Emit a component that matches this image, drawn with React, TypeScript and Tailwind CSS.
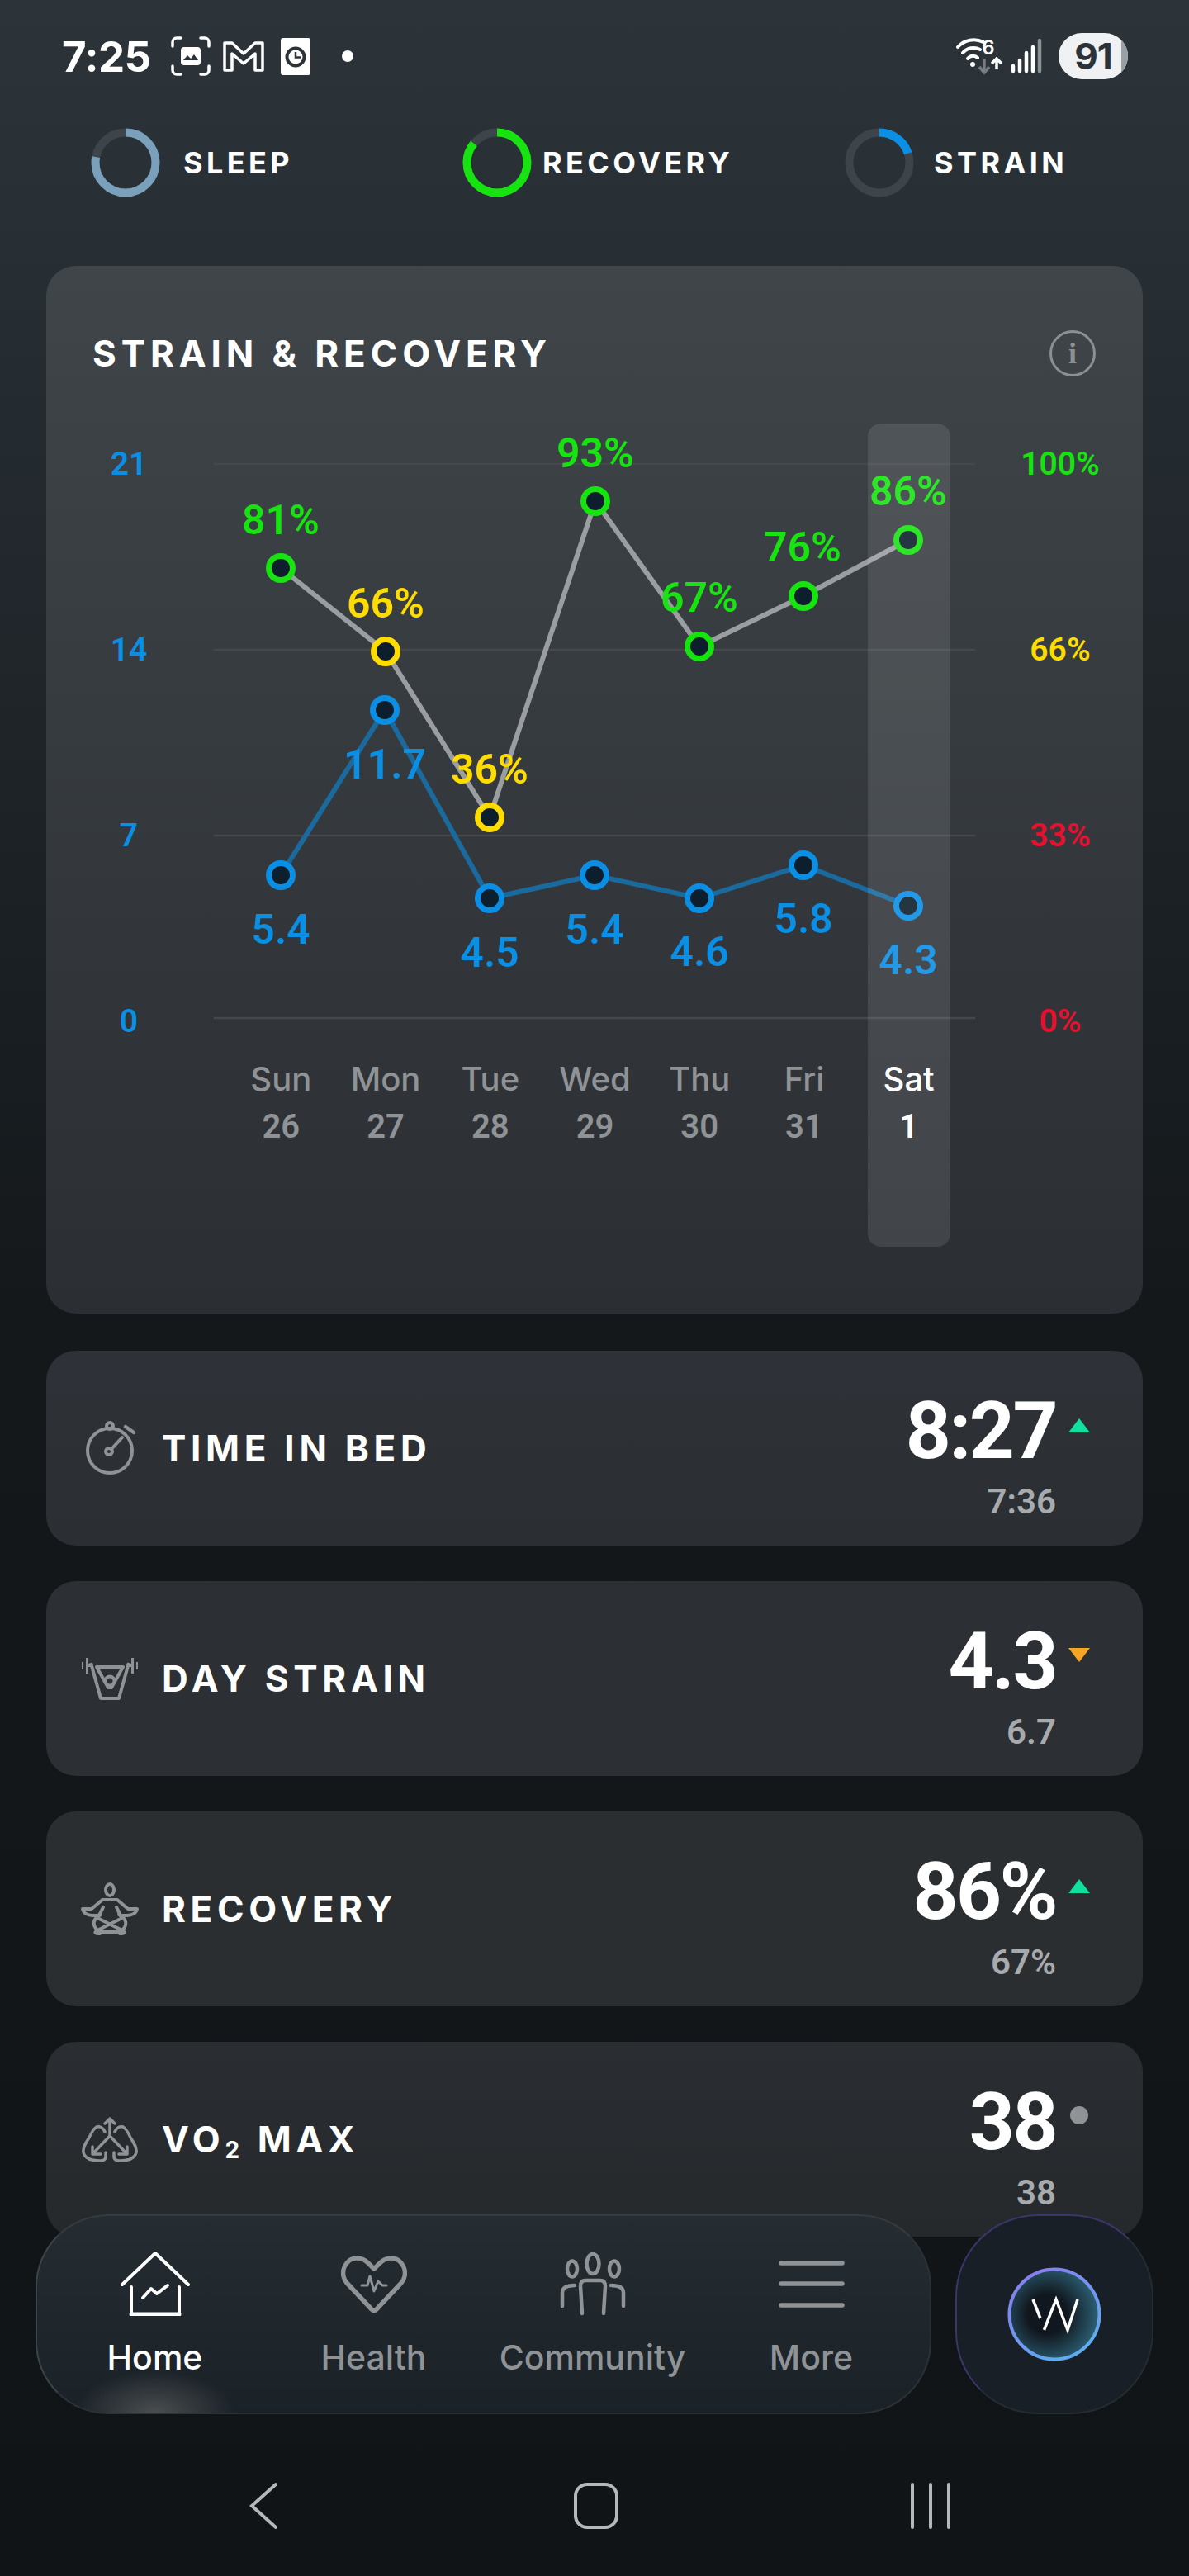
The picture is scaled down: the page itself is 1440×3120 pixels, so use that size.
import React from "react";

const GREEN = "#16e30f";
const YELLOW = "#ffdc00";
const RED = "#e8102e";
const BLUE = "#0b8fe4";

const recovery = [
  { x: 340, y: 688, label: "81%", lx: 340, ly: 630, color: GREEN },
  { x: 467, y: 789, label: "66%", lx: 467, ly: 731, color: YELLOW },
  { x: 593, y: 990, label: "36%", lx: 593, ly: 932, color: YELLOW },
  { x: 721, y: 607, label: "93%", lx: 721, ly: 549, color: GREEN },
  { x: 847, y: 783, label: "67%", lx: 847, ly: 724, color: GREEN },
  { x: 973, y: 722, label: "76%", lx: 972, ly: 663, color: GREEN },
  { x: 1100, y: 654, label: "86%", lx: 1100, ly: 595, color: GREEN },
];

const strain = [
  { x: 340, y: 1060, label: "5.4", ly: 1126 },
  { x: 466, y: 860, label: "11.7", ly: 926 },
  { x: 593, y: 1088, label: "4.5", ly: 1154 },
  { x: 720, y: 1060, label: "5.4", ly: 1126 },
  { x: 847, y: 1088, label: "4.6", ly: 1153 },
  { x: 973, y: 1048, label: "5.8", ly: 1113 },
  { x: 1100, y: 1097, label: "4.3", ly: 1163 },
];

const gridLines = [562, 787, 1012, 1233];

const leftAxis = [
  { y: 562, label: "21" },
  { y: 787, label: "14" },
  { y: 1012, label: "7" },
  { y: 1237, label: "0" },
];

const rightAxis = [
  { y: 562, label: "100%", color: GREEN },
  { y: 787, label: "66%", color: YELLOW },
  { y: 1012, label: "33%", color: RED },
  { y: 1237, label: "0%", color: RED },
];

const days = [
  ["Sun", "26"],
  ["Mon", "27"],
  ["Tue", "28"],
  ["Wed", "29"],
  ["Thu", "30"],
  ["Fri", "31"],
  ["Sat", "1"],
];

const Ring = ({ pct, color }: { pct: number; color: string }) => (
  <svg width="84" height="84" viewBox="0 0 84 84" className="shrink-0">
    <circle cx="42" cy="42" r="36.5" fill="none" stroke="#3e454a" strokeWidth="10" />
    <circle
      cx="42"
      cy="42"
      r="36.5"
      fill="none"
      stroke={color}
      strokeWidth="10"
      pathLength={100}
      strokeDasharray={`${pct} 100`}
      transform="rotate(-90 42 42)"
    />
  </svg>
);

const StatusBar = () => (
  <div className="flex h-[136px] items-center justify-between pl-[75px] pr-[74px]">
    <div className="flex items-center">
      <span className="w-[132px] font-['Inter',sans-serif] text-[51px] font-bold leading-none tracking-[-0.5px] text-white">7:25</span>
      <svg width="48" height="48" viewBox="0 0 48 48" fill="none" stroke="#fff" strokeWidth="3.5" strokeLinecap="round">
        <path d="M2 12V7a5 5 0 0 1 5-5h5M36 2h5a5 5 0 0 1 5 5v5M46 36v5a5 5 0 0 1-5 5h-5M12 46H7a5 5 0 0 1-5-5v-5" />
        <rect x="12" y="13" width="24" height="22" rx="4" fill="#fff" stroke="none" />
        <path d="M15 29l5-6 4 4 4-5 5 7z" fill="#2b3339" stroke="none" />
      </svg>
      <svg width="50" height="40" viewBox="0 0 50 40" fill="none" stroke="#fff" strokeWidth="3.5" strokeLinejoin="round" className="ml-[15px]">
        <path d="M2 4h9l14 13L39 4h9v33h-9V17L25 29 11 17v20H2z" />
      </svg>
      <svg width="36" height="45" viewBox="0 0 36 45" className="ml-[20px]">
        <rect width="36" height="45" rx="3" fill="#fff" />
        <circle cx="18" cy="23" r="10.5" fill="none" stroke="#2b3339" strokeWidth="4" />
        <path d="M18 17v6.5h6" fill="none" stroke="#2b3339" strokeWidth="2.5" />
      </svg>
      <span className="ml-[38px] h-[14px] w-[14px] rounded-full bg-white" />
    </div>
    <div className="flex items-center">
      <svg width="104" height="50" viewBox="1158 44 104 50" fill="none">
        <path d="M1160 58a26 26 0 0 1 31-6M1166 65a17 17 0 0 1 21-4M1172 72a8 8 0 0 1 12-1" stroke="#fff" strokeWidth="4" strokeLinecap="round" />
        <circle cx="1178" cy="79" r="3" fill="#fff" />
        <text x="1197" y="67" fontSize="24" fontWeight="600" fill="#fff" textAnchor="middle" fontFamily="Inter, sans-serif">6</text>
        <path d="M1192 73v15M1186 82l6 7 6-7" stroke="#777c80" strokeWidth="3.5" />
        <path d="M1207 85V72M1201 78l6-6 6 6" stroke="#fff" strokeWidth="3.5" />
        <g strokeWidth="4.5" strokeLinecap="round">
          <path d="M1227 81v6M1235 74v13M1243 65v22M1251 58v29" stroke="#fff" />
          <path d="M1259 50v37" stroke="#8b9094" />
        </g>
      </svg>
      <div className="relative ml-[20px] flex h-[56px] w-[84px] items-center justify-center overflow-hidden rounded-[28px] bg-[#eff1f2]">
        <span className="font-['Inter',sans-serif] text-[44px] font-bold leading-none tracking-[-1px] text-[#2b3338]">91</span>
        <span className="absolute bottom-0 right-0 top-0 w-[8px] bg-[#9aa0a3]" />
      </div>
    </div>
  </div>
);

const Tab = ({ label, pct, color, className }: { label: string; pct: number; color: string; className: string }) => (
  <div className={`flex items-center ${className}`}>
    <Ring pct={pct} color={color} />
    <span className="font-['Inter',sans-serif] text-[36px] font-bold leading-none tracking-[4.4px] text-white">{label}</span>
  </div>
);

const Chart = () => (
  <svg width="1328" height="780" viewBox="56 500 1328 780" className="block">
    {gridLines.map((y) => (
      <line key={y} x1="259" x2="1181" y1={y} y2={y} stroke="#45494c" strokeWidth="2.5" />
    ))}
    <polyline points={strain.map((p) => `${p.x},${p.y}`).join(" ")} fill="none" stroke="#1a6a9e" strokeWidth="6" />
    <polyline points={recovery.map((p) => `${p.x},${p.y}`).join(" ")} fill="none" stroke="#9a9ea1" strokeWidth="6" />
    <g fontSize="50" fontWeight="600" textAnchor="middle" dominantBaseline="central">
      {recovery.map((p) => (
        <text key={p.x} x={p.lx} y={p.ly} fill={p.color}>{p.label}</text>
      ))}
      {strain.map((p) => (
        <text key={p.x} x={p.x} y={p.ly} fill={BLUE}>{p.label}</text>
      ))}
    </g>
    <g fontSize="39" fontWeight="600" textAnchor="middle" dominantBaseline="central">
      {leftAxis.map((g) => (
        <text key={g.y} x="156" y={g.y} fill={BLUE}>{g.label}</text>
      ))}
      {rightAxis.map((g) => (
        <text key={g.y} x="1284" y={g.y} fill={g.color}>{g.label}</text>
      ))}
    </g>
    {recovery.map((p) => (
      <circle key={p.x} cx={p.x} cy={p.y} r="14.5" fill="#0d1f2c" stroke={p.color} strokeWidth="7" />
    ))}
    {strain.map((p) => (
      <circle key={p.x} cx={p.x} cy={p.y} r="14.5" fill="#0d1f2c" stroke={BLUE} strokeWidth="7" />
    ))}
  </svg>
);

const StrainCard = () => (
  <div className="relative mx-[56px] h-[1269px] rounded-[36px] bg-gradient-to-b from-[#3f4549] to-[#2b2e33]">
    <div className="flex h-[178px] items-start justify-between pl-[56px] pr-[57px] pt-[78px]">
      <h2 className="font-['Inter',sans-serif] text-[44px] font-bold leading-[56px] tracking-[5.9px] text-white">STRAIN &amp; RECOVERY</h2>
      <div className="flex h-[56px] w-[56px] items-center justify-center rounded-full border-[3.5px] border-[#8c9093] font-['Liberation_Serif',serif] text-[36px] font-bold leading-none text-[#8c9093]">i</div>
    </div>
    <Chart />
    <div className="ml-[221px] mt-[7px] grid w-[887px] grid-cols-7 text-center">
      {days.map(([d, n]) => (
        <div key={d} className={d === "Sat" ? "text-white" : "text-[#8f9396]"}>
          <div className="font-['Inter',sans-serif] text-[40px] font-medium leading-[40px]">{d}</div>
          <div className="mt-[18px] text-[40px] font-semibold leading-[40px]">{n}</div>
        </div>
      ))}
    </div>
    <div className="absolute left-[995px] top-[191px] h-[997px] w-[100px] rounded-2xl bg-white/10" />
  </div>
);

const StopwatchIcon = () => (
  <svg width="70" height="68" viewBox="0 0 70 68" fill="none" stroke="#8f9396" strokeWidth="4">
    <circle cx="35" cy="37" r="27" />
    <circle cx="35" cy="7" r="4" />
    <circle cx="34" cy="38" r="4" />
    <path d="M37 35l13-14" strokeLinecap="round" />
    <path d="M54 8l10 7" strokeWidth="4.5" strokeLinecap="round" />
  </svg>
);

const BarbellIcon = () => (
  <svg width="70" height="54" viewBox="0 0 70 54" fill="none" stroke="#8f9396" strokeWidth="4" strokeLinejoin="round">
    <path d="M1 7h2v9H1zM6 2h3v19H6zM67 7h2v9h-2zM61 2h3v19h-3z" fill="#8f9396" stroke="none" />
    <path d="M9 11h4M57 11h4" />
    <path d="M12 8l12 43h22L58 8" />
    <path d="M19 13h32L37 38h-4z" />
    <circle cx="35" cy="30" r="5.5" />
  </svg>
);

const MeditateIcon = () => (
  <svg width="70" height="66" viewBox="0 0 70 66" fill="none" stroke="#8f9396" strokeWidth="4" strokeLinejoin="round" strokeLinecap="round">
    <ellipse cx="35" cy="10" rx="5" ry="7" />
    <path d="M26 22h18l13 11h11c-1 5-6 8-12 8h-8l-5-10M26 22L13 33H2c1 5 6 8 12 8h8l5-10" />
    <path d="M24 40l-4 3c-7 5-5 13 3 18h24c8-5 10-13 3-18l-4-3" />
    <path d="M20 44l30 15c5 3 2 4-3 4M50 44L20 59c-5 3-2 4 3 4" />
  </svg>
);

const LungsIcon = () => (
  <svg width="70" height="54" viewBox="0 0 70 54" fill="none" stroke="#8f9396" strokeWidth="3.5" strokeLinejoin="round" strokeLinecap="round">
    <path d="M35 2v21M29 8l6-6 6 6" />
    <path d="M35 23L14 45M35 23l21 22M14 36v9h10M56 36v9H46" />
    <path d="M29 18c-2-5-6-7-10-6-4 2-6 7-9 13-4 6-8 12-7 18 2 9 12 10 20 10 5 0 7-2 7-5v-5" />
    <path d="M41 18c2-5 6-7 10-6 4 2 6 7 9 13 4 6 8 12 7 18-2 9-12 10-20 10-5 0-7-2-7-5v-5" />
  </svg>
);

const Indicator = ({ type }: { type: "up" | "down" | "dot" }) => {
  if (type === "dot") return <div className="mt-[29px] h-[22px] w-[22px] rounded-full bg-[#8f9396]" />;
  return (
    <svg width="26" height="17" viewBox="0 0 26 17" className={type === "up" ? "mt-[33px] block" : "mt-[32px] block"}>
      {type === "up" ? <path d="M0 17L13 0l13 17z" fill="#0fe0a0" /> : <path d="M0 0h26L13 17z" fill="#f5a623" />}
    </svg>
  );
};

const MetricRow = ({
  icon,
  label,
  value,
  sub,
  trend,
  className,
}: {
  icon: React.ReactNode;
  label: React.ReactNode;
  value: string;
  sub: string;
  trend: "up" | "down" | "dot";
  className: string;
}) => (
  <div className={`flex h-[236px] items-center rounded-[36px] pl-[40px] ${className}`}>
    <div className="flex w-[100px] shrink-0 items-center pl-[2px]">{icon}</div>
    <div className="font-['Inter',sans-serif] text-[44px] font-bold leading-none tracking-[5.7px] text-white">{label}</div>
    <div className={`ml-auto flex self-start pt-[49px] ${trend === "dot" ? "pr-[66px]" : "pr-[64px]"}`}>
      <div className="flex flex-col items-end">
        <div className="text-[96px] font-bold leading-[96px] tracking-[-2.5px] text-white">{value}</div>
        <div className="mt-[18px] text-[42px] font-semibold leading-[40px] text-[#a7abad]">{sub}</div>
      </div>
      <div className={trend === "dot" ? "ml-[17px]" : "ml-[15px]"}>
        <Indicator type={trend} />
      </div>
    </div>
  </div>
);

const NavItem = ({ label, icon, active }: { label: string; icon: React.ReactNode; active?: boolean }) => (
  <div className="flex flex-col items-center">
    <div className="flex h-[78px] items-center justify-center">{icon}</div>
    <span className={`mt-[30px] font-['Inter',sans-serif] text-[41px] font-medium leading-[40px] ${active ? "text-white" : "text-[#8f9396]"}`}>{label}</span>
  </div>
);

const BottomNav = () => (
  <div className="absolute left-[43px] top-[2682px] flex h-[242px] w-[1354px] justify-between">
    <nav className="relative h-full w-[1085px] overflow-hidden rounded-[88px] border-2 border-[#2a3137] border-l-[#3d4448] border-t-[#343c40] bg-gradient-to-b from-[#252d33] to-[#1a2127] pl-[10px] pt-[43px]">
      <div className="absolute bottom-[-50px] left-[44px] h-[100px] w-[196px] rounded-full bg-[radial-gradient(closest-side,#4a4e50,transparent)]" />
      <div className="relative grid w-[1060px] grid-cols-4">
        <NavItem label="Home" active icon={
          <svg width="84" height="78" viewBox="0 0 84 78" fill="none" stroke="#fff" strokeWidth="4" strokeLinecap="round" strokeLinejoin="round">
            <path d="M2 40L42 2l40 38" />
            <path d="M13 43v33h58V43" />
            <path d="M13 76h58" strokeWidth="5" />
            <path d="M27 56l10-11 7 6 13-10" />
          </svg>
        } />
        <NavItem label="Health" icon={
          <svg width="80" height="74" viewBox="0 0 80 74" fill="none" stroke="#8f9396" strokeWidth="5.5" strokeLinejoin="round" strokeLinecap="round">
            <path d="M40 19l-7-7c-8-8-20-8-26 0-6 7-6 17 0 24l30 32c2 2 4 2 6 0l30-32c6-7 6-17 0-24-6-8-18-8-26 0z" />
            <path d="M25 39h7l3-11 5 18 5-12 5 5h5" strokeWidth="3" />
          </svg>
        } />
        <NavItem label="Community" icon={
          <svg width="84" height="78" viewBox="0 0 84 78" fill="none" stroke="#8f9396" strokeWidth="4.5" strokeLinecap="round">
            <ellipse cx="17" cy="21" rx="6" ry="9.5" />
            <ellipse cx="42" cy="15" rx="7.5" ry="12" />
            <ellipse cx="68" cy="21" rx="6" ry="9.5" />
            <path d="M20 41c-9 0-15 2-15 9v16M64 41c9 0 15 2 15 9v16" />
            <path d="M29 75l-2-33q0-7 6-7h18q6 0 6 7l-2 33" />
          </svg>
        } />
        <NavItem label="More" icon={
          <svg width="80" height="78" viewBox="0 0 80 78" fill="none" stroke="#8f9396" strokeWidth="5.5" strokeLinecap="round">
            <path d="M3 14h74M3 39h74M3 65h74" />
          </svg>
        } />
      </div>
    </nav>
    <div className="flex h-full w-[240px] items-center justify-center rounded-[100px] border-2 border-[#232c33] border-l-[#3a3768] border-t-[#3a3768] bg-[#181f27]">
      <svg width="116" height="116" viewBox="0 0 116 116" className="ml-[-1px]">
        <defs>
          <linearGradient id="ringStroke" x1="0.2" y1="0" x2="0.8" y2="1">
            <stop offset="0" stopColor="#8a7cf0" />
            <stop offset="1" stopColor="#5ab0f0" />
          </linearGradient>
          <radialGradient id="ringFill" cx="0.42" cy="0.5" r="0.62">
            <stop offset="0.35" stopColor="#11171e" />
            <stop offset="1" stopColor="#2f6a80" />
          </radialGradient>
        </defs>
        <circle cx="58" cy="58" r="54.5" fill="url(#ringFill)" stroke="url(#ringStroke)" strokeWidth="4" />
        <path d="M32 40l9 23M45.500 77L60 40l14 37 12-37" fill="none" stroke="#fff" strokeWidth="3.500" />
      </svg>
    </div>
  </div>
);

const SystemNav = () => (
  <div className="absolute bottom-[56px] left-0 flex h-[58px] w-full items-center">
    <svg width="36" height="58" viewBox="0 0 36 58" fill="none" stroke="#b4b8ba" strokeWidth="4" strokeLinecap="round" className="ml-[301px]">
      <path d="M33 3L4 29l29 26" />
    </svg>
    <svg width="56" height="58" viewBox="0 0 56 58" fill="none" stroke="#b4b8ba" strokeWidth="4" className="ml-[357px]">
      <rect x="3" y="3" width="50" height="52" rx="14" />
    </svg>
    <svg width="50" height="58" viewBox="0 0 50 58" fill="none" stroke="#b4b8ba" strokeWidth="4" strokeLinecap="round" className="ml-[352px]">
      <path d="M3 3v52M25 3v52M47 3v52" />
    </svg>
  </div>
);

export default function App() {
  return (
    <div className="relative h-[3120px] w-[1440px] overflow-hidden bg-gradient-to-b from-[#2c343a] via-[#14181b] via-[51%] to-[#101417] font-['Roboto',sans-serif]">
      <StatusBar />
      <div className="flex h-[186px] items-start pt-[19px]">
        <Tab label="SLEEP" pct={78} color="#7ba0bb" className="ml-[110px] w-[450px] gap-[28px]" />
        <Tab label="RECOVERY" pct={86} color={GREEN} className="w-[463px] gap-[13px]" />
        <Tab label="STRAIN" pct={20} color={BLUE} className="gap-[24px]" />
      </div>
      <StrainCard />
      <div className="mx-[56px] mt-[45px] flex flex-col gap-[43px]">
        <MetricRow icon={<StopwatchIcon />} label="TIME IN BED" value="8:27" sub="7:36" trend="up" className="bg-gradient-to-b from-[#2e3137] to-[#2b2e32]" />
        <MetricRow icon={<BarbellIcon />} label="DAY STRAIN" value="4.3" sub="6.7" trend="down" className="bg-[#2c2f33]" />
        <MetricRow icon={<MeditateIcon />} label="RECOVERY" value="86%" sub="67%" trend="up" className="bg-[#2b2e31]" />
        <MetricRow
          icon={<LungsIcon />}
          label={<>VO<sub className="text-[28px]">2</sub> MAX</>}
          value="38"
          sub="38"
          trend="dot"
          className="bg-gradient-to-b from-[#2a2d31] to-[#25292c]"
        />
      </div>
      <BottomNav />
      <SystemNav />
    </div>
  );
}
